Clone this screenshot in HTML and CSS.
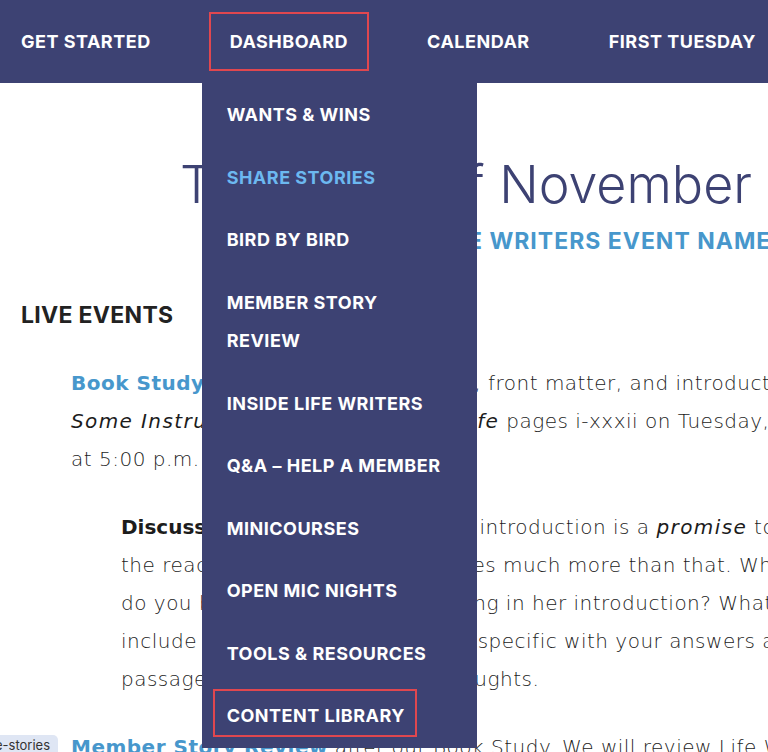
FILE: index.html
```html
<!DOCTYPE html>
<html lang="en">

<head>
  <meta charset="UTF-8">
  <meta name="viewport" content="width=device-width, initial-scale=1.0">
  <title>Life Writers - Dashboard</title>
  <link rel="stylesheet" href="styles.css">
</head>

<body>
  <header class="site-header">
    <nav class="main-nav">
      <ul class="menu">
        <li class="menu-item"><a href="#">Get Started</a></li>
        <li class="menu-item">
          <a href="#" class="is-marked">Dashboard</a>
          <ul class="sub-menu">
            <li><a href="#">Wants &amp; Wins</a></li>
            <li><a href="#" class="is-current">Share Stories</a></li>
            <li><a href="#">Bird by Bird</a></li>
            <li><a href="#">Member Story Review</a></li>
            <li><a href="#">Inside Life Writers</a></li>
            <li><a href="#">Q&amp;A &ndash; Help a Member</a></li>
            <li><a href="#">Minicourses</a></li>
            <li><a href="#">Open Mic Nights</a></li>
            <li><a href="#">Tools &amp; Resources</a></li>
            <li><a href="#" class="is-marked">Content Library</a></li>
          </ul>
        </li>
        <li class="menu-item"><a href="#">Calendar</a></li>
        <li class="menu-item"><a href="#">First Tuesday</a></li>
      </ul>
    </nav>
  </header>

  <main class="content">
    <h1 class="page-title">The Heart of November</h1>
    <p class="page-subtitle">Life Writers Event Names</p>

    <h2 class="section-title">Live Events</h2>

    <p class="event">
      <a href="#">Book Study</a>: read acknowledgements, front matter, and introduction of Bird by Bird:<br>
      <em>Some Instructions on Writing and Life</em> pages i-xxxii on Tuesday, November 5,<br>
      at 5:00 p.m. Pacific.
    </p>

    <p class="discussion">
      <strong>Discussion:</strong> Anne Lamott said an introduction is a <em>promise</em> to<br>
      the reader of what is ahead. It does much more than that. What<br>
      do you believe she is accomplishing in her introduction? What does she<br>
      include that you didn&rsquo;t guess? Be specific with your answers and quote<br>
      passages, which support your thoughts.
    </p>

    <p class="event">
      <a href="#">Member Story Review</a> after our Book Study. We will review Life Writers stories.
    </p>
  </main>

  <div class="status-bubble">lifewriters.com/share-stories</div>
</body>

</html>
```

FILE: styles.css
```css
body {
  margin: 0;
  font-family: Inter, "Noto Sans", sans-serif;
  color: #222;
  background-color: #fff;
  overflow-x: hidden;
}

.site-header {
  background-color: #3d4273;
  height: 83px;
  position: relative;
  z-index: 10;
}

.menu {
  list-style: none;
  margin: 0;
  padding: 0 0 0 2px;
  height: 83px;
  display: flex;
  gap: 41px;
}

.menu-item {
  position: relative;
  display: flex;
  align-items: center;
}

.menu-item > a {
  color: #fff;
  text-decoration: none;
  text-transform: uppercase;
  font-weight: 700;
  font-size: 18px;
  letter-spacing: 0.5px;
  line-height: 19px;
  padding: 18px 19px;
  white-space: nowrap;
}

.menu-item > a.is-marked {
  outline: 2px solid #e0474f;
}

.sub-menu {
  list-style: none;
  position: absolute;
  top: 100%;
  left: -9px;
  width: 275px;
  margin: 0;
  padding: 1px 0 0;
  background-color: #3d4273;
}

.sub-menu li {
  padding: 12px 30px 12px 25px;
  line-height: 38.5px;
}

.sub-menu a {
  position: relative;
  color: #fff;
  text-decoration: none;
  text-transform: uppercase;
  font-weight: 700;
  font-size: 18px;
  letter-spacing: 0.5px;
}

.sub-menu a.is-current {
  color: #6cb8f0;
}

.sub-menu a.is-marked::after {
  content: "";
  position: absolute;
  top: -16px;
  bottom: -11px;
  left: -14px;
  right: -12px;
  border: 2px solid #e0474f;
}

.content {
  padding: 0 21px;
}

.page-title {
  margin: 0;
  padding: 70px 0 0 159px;
  font-size: 52px;
  line-height: 64px;
  font-weight: 300;
  color: #3d4273;
  white-space: nowrap;
}

.page-subtitle {
  margin: 9px 0 0;
  padding-left: 411px;
  font-size: 23px;
  letter-spacing: 1px;
  line-height: 30px;
  font-weight: 700;
  text-transform: uppercase;
  color: #4797cc;
  white-space: nowrap;
}

.section-title {
  margin: 44px 0 0;
  padding-bottom: 4px;
  font-size: 23px;
  letter-spacing: 0.3px;
  line-height: 30px;
  font-weight: 700;
  text-transform: uppercase;
  color: #222;
}

.event,
.discussion {
  margin: 30px 0 0 50px;
  font-family: "DejaVu Sans", sans-serif;
  font-size: 20px;
  letter-spacing: 0.5px;
  line-height: 38px;
  font-weight: 200;
  color: #1c1c1c;
  white-space: nowrap;
}

.discussion {
  margin-left: 100px;
}

.event em,
.discussion em {
  letter-spacing: 1.4px;
}

.event a {
  color: #4797cc;
  font-weight: 700;
  text-decoration: none;
}

.discussion strong {
  font-weight: 700;
  letter-spacing: 0;
}

.status-bubble {
  position: fixed;
  left: 0;
  bottom: 0;
  width: 50px;
  height: 17px;
  padding-right: 8px;
  overflow: hidden;
  direction: rtl;
  background-color: #dfe6f4;
  border-top-right-radius: 5px;
  font-size: 13px;
  line-height: 20px;
  color: #333;
  white-space: nowrap;
  z-index: 20;
}
```
